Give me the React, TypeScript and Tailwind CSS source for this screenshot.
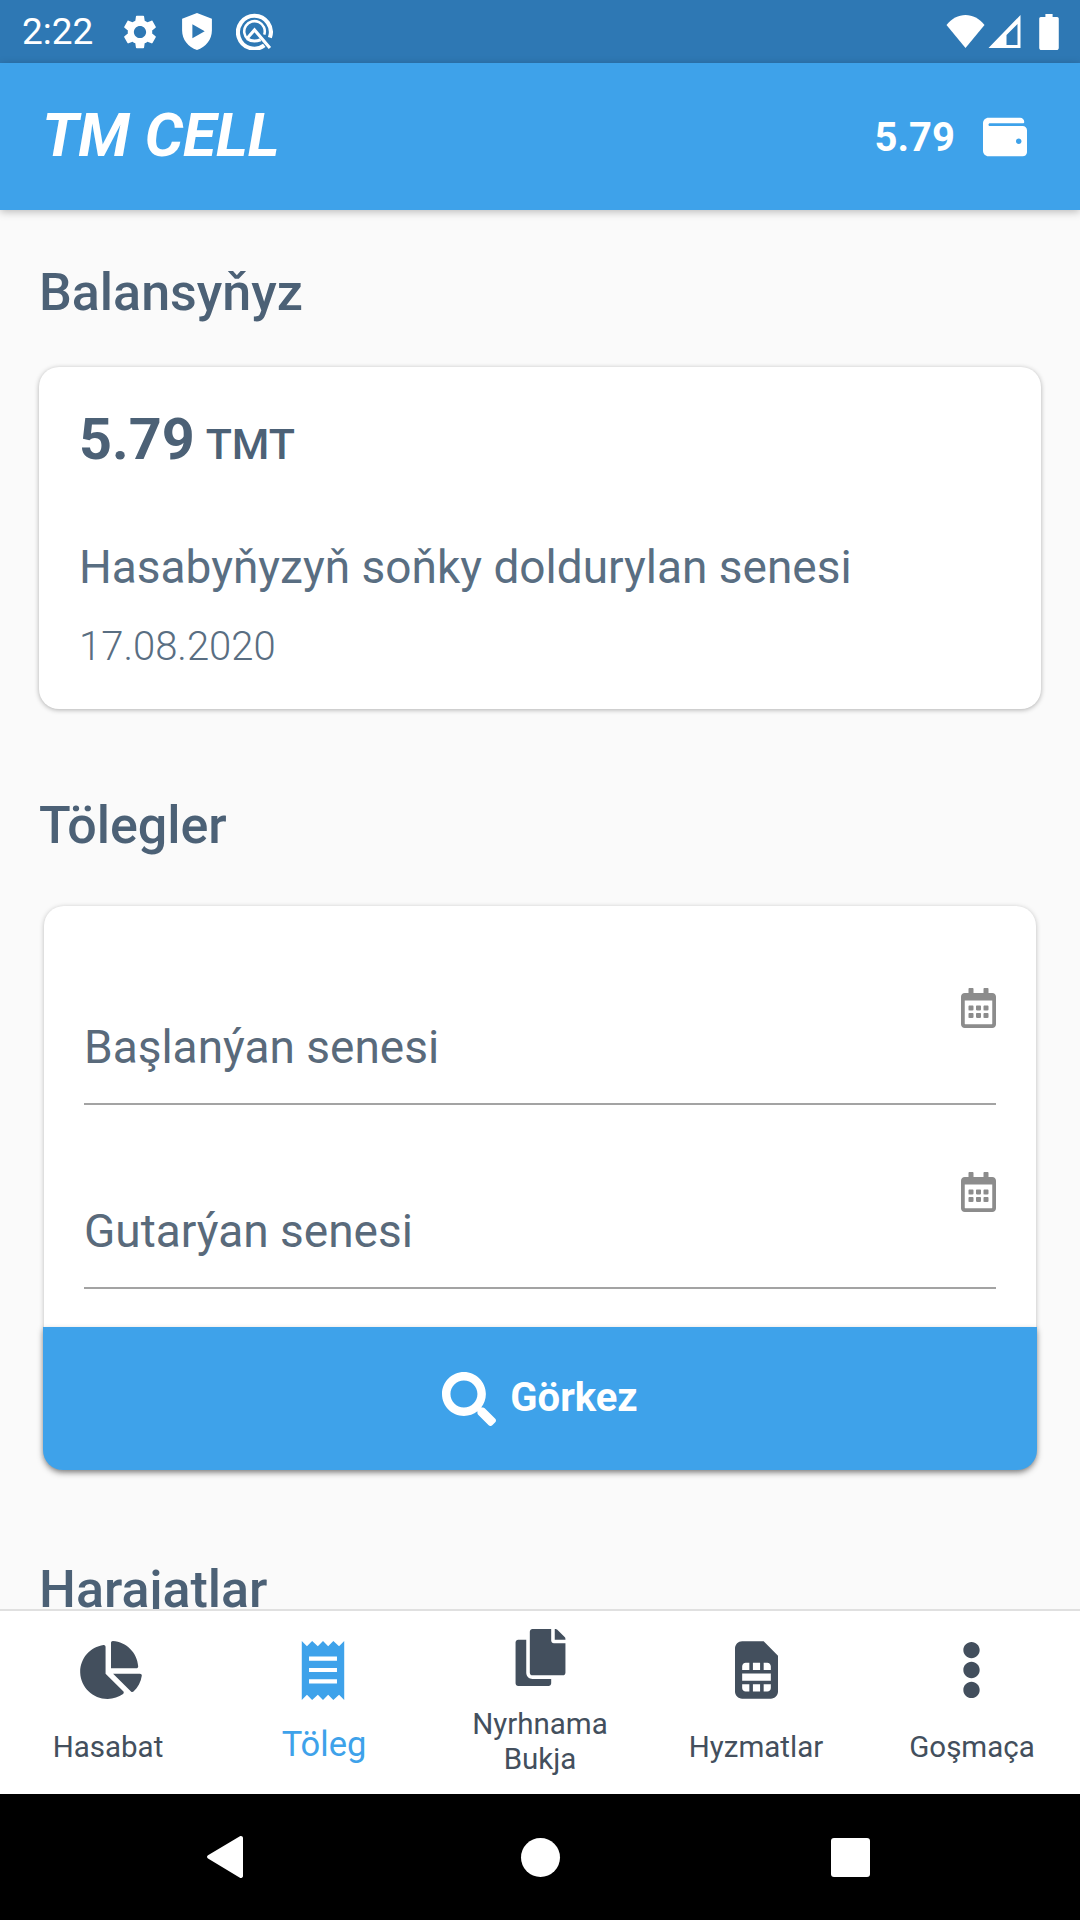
import React from 'react';
import { FaChartPie, FaCopy, FaEllipsisV, FaRegCalendarAlt, FaSearch, FaSimCard, FaWallet } from 'react-icons/fa';

const Gear = () => (
  <svg viewBox="2 2 20 20" className="w-[34px] h-[34px] fill-white">
    <path d="M19.14 12.94c.04-.3.06-.61.06-.94 0-.32-.02-.64-.07-.94l2.03-1.58c.18-.14.23-.41.12-.61l-1.92-3.32c-.12-.22-.37-.29-.59-.22l-2.39.96c-.5-.38-1.03-.7-1.62-.94l-.36-2.54c-.04-.24-.24-.41-.48-.41h-3.84c-.24 0-.43.17-.47.41l-.36 2.54c-.59.24-1.13.57-1.62.94l-2.39-.96c-.22-.08-.47 0-.59.22L2.74 8.87c-.12.21-.08.47.12.61l2.03 1.58c-.05.3-.09.63-.09.94s.02.64.07.94l-2.03 1.58c-.18.14-.23.41-.12.61l1.92 3.32c.12.22.37.29.59.22l2.39-.96c.5.38 1.03.7 1.62.94l.36 2.54c.05.24.24.41.48.41h3.84c.24 0 .44-.17.47-.41l.36-2.54c.59-.24 1.13-.56 1.62-.94l2.39.96c.22.08.47 0 .59-.22l1.92-3.32c.12-.22.07-.47-.12-.61l-2.01-1.58zM12 15.6c-1.98 0-3.6-1.62-3.6-3.6s1.62-3.6 3.6-3.6 3.6 1.62 3.6 3.6-1.62 3.6-3.6 3.6z" />
  </svg>
);

const ShieldPlay = () => (
  <svg viewBox="0 0 29 36" className="w-[30px] h-[37px]">
    <path fill="#fff" fillRule="evenodd" d="M14.5 0 29 5.5V17c0 8.8-6 16.2-14.5 19C6 33.2 0 25.8 0 17V5.5L14.5 0zM10 11v13.5L22 17.7 10 11z" />
  </svg>
);

const QLogo = () => (
  <svg viewBox="0 0 36 36" className="w-[37px] h-[37px]" fill="none" stroke="#fff">
    <path strokeWidth="4" d="M27.500 31.500A16 16 0 1 1 33 24" />
    <path strokeWidth="2.500" d="M11.500 25.500A10 10 0 1 1 27.500 21" />
    <path strokeWidth="3" d="M10.500 25 18 16.500 33 34" />
    <path strokeWidth="3" d="M11 25C15 28 19 28 24 26" />
  </svg>
);

const Wifi = () => (
  <svg viewBox="0 0 38 33" className="w-[39px] h-[33px] fill-white">
    <path d="M19 33 0 10C5 3.500 12 0 19 0s14 3.500 19 10L19 33z" />
  </svg>
);

const Signal = () => (
  <svg viewBox="0 0 32 33" className="w-[33px] h-[33px] fill-white">
    <path fillRule="evenodd" d="M32 0v33H0L32 0zM29 9 18 20v10h11V9z" />
  </svg>
);

const Battery = () => (
  <svg viewBox="0 0 19 35" className="w-[20px] h-[36px] fill-white">
    <path d="M6 0h7v3h4.500c.8 0 1.500.7 1.500 1.500V33c0 1.100-.9 2-2 2H2c-1.100 0-2-.9-2-2V4.500C0 3.700.7 3 1.500 3H6V0z" />
  </svg>
);

const Receipt = () => (
  <svg viewBox="0 0 41 57" className="w-[44px] h-[59px] -translate-x-[1px]">
    <path fill="#3ea2ea" d="M0 0l5 5 5-5 5.500 5L20.500 0l5 5 5-5 5.500 5L41 0v57l-5-5-5.500 5-5-5-5 5-5-5-5.500 5-5-5-5 5V0z" />
    <path fill="#fff" d="M7 15h27v4H7zM7 26h27v4H7zM7 37h27v4H7z" />
  </svg>
);

const navItems = [
  { label: 'Hasabat', icon: <FaChartPie className="w-[64px] h-[58px] translate-x-[3px]" />, labelClass: 'mt-[31px] text-[29.5px] leading-[35px] text-[#434f5d]' },
  { label: 'Töleg', icon: <Receipt />, labelClass: 'mt-[23px] text-[34.5px] leading-[42px] text-[#3ea2ea]' },
  { label: 'Nyrhnama Bukja', icon: <FaCopy className="w-[57px] h-[57px]" />, labelClass: 'mt-[21px] w-[150px] text-[29.5px] leading-[35px] text-[#434f5d]' },
  { label: 'Hyzmatlar', icon: <FaSimCard className="w-[43px] h-[58px]" />, labelClass: 'mt-[31px] text-[29.5px] leading-[35px] text-[#434f5d]' },
  { label: 'Goşmaça', icon: <FaEllipsisV className="w-[57px] h-[58px] -translate-x-[1px]" />, labelClass: 'mt-[31px] text-[29.5px] leading-[35px] text-[#434f5d]' },
];

const DateField = ({ label, className }: { label: string; className: string }) => (
  <div className={`relative h-[117px] border-b-2 border-[#a3a3a3] ${className}`}>
    <span className="absolute left-0 bottom-[29px] text-[46px] leading-[54px] text-[#596a7b]">{label}</span>
    <FaRegCalendarAlt className="absolute right-0 top-0 w-[35px] h-[40px] text-[#8c8c8c]" />
  </div>
);

export default function App() {
  return (
    <div className="w-[1080px] h-[1920px] flex flex-col overflow-hidden bg-[#fafafa] font-['Roboto',sans-serif]">
      {/* status bar */}
      <div className="h-[63px] shrink-0 bg-[#2e78b4] flex items-center pl-[22px] pr-[21px] text-white">
        <span className="text-[37px] leading-[43px] w-[101px]">2:22</span>
        <Gear />
        <div className="ml-[25px]"><ShieldPlay /></div>
        <div className="ml-[24px]"><QLogo /></div>
        <div className="ml-auto flex items-center gap-[3px]">
          <Wifi />
          <Signal />
          <div className="ml-[15px]"><Battery /></div>
        </div>
      </div>

      {/* app bar */}
      <div className="relative z-10 h-[147px] shrink-0 bg-[#3ea2ea] flex items-center pl-[42px] pr-[53px] text-white shadow-[0_2px_8px_rgba(0,0,0,0.25)]">
        <span className="text-[60.5px] leading-[70px] font-bold italic -mt-[2px]">TM CELL</span>
        <span className="ml-auto text-[40px] leading-[47px] font-bold mt-[1px]">5.79</span>
        <FaWallet className="ml-[28px] w-[44px] h-[44px]" />
      </div>

      {/* scroll area */}
      <div className="flex-1 min-h-0 overflow-hidden px-[39px] pt-[53px]">
        <h2 className="text-[52px] leading-[59px] font-medium text-[#4c6176]">Balansyňyz</h2>
        <div className="mt-[45px] h-[342px] bg-white rounded-[20px] shadow-[0_1px_5px_rgba(0,0,0,0.3)] px-[40px] pt-[40px]">
          <div className="flex items-baseline text-[#4c6176]">
            <span className="text-[57.5px] leading-[66px] font-bold">5.79</span>
            <span className="ml-[11px] text-[43px] leading-[50px] font-medium">TMT</span>
          </div>
          <p className="mt-[67px] text-[46px] leading-[54px] text-[#596e82]">Hasabyňyzyň soňky doldurylan senesi</p>
          <p className="mt-[29px] text-[40px] leading-[47px] font-light text-[#596e82]">17.08.2020</p>
        </div>

        <h2 className="mt-[87px] text-[52px] leading-[59px] font-medium text-[#4c6176]">Tölegler</h2>
        <div className="mt-[51px] mx-[5px] h-[564px] flex flex-col bg-white rounded-[20px] shadow-[0_1px_5px_rgba(0,0,0,0.25)]">
          <div className="flex-1 px-[40px] pt-[82px]">
            <DateField label="Başlanýan senesi" className="" />
            <DateField label="Gutarýan senesi" className="mt-[67px]" />
          </div>
          <div className="h-[143px] -mx-[1px] rounded-b-[20px] bg-[#3ea2ea] flex items-center justify-center text-white shadow-[0_3px_6px_rgba(0,0,0,0.35)]">
            <FaSearch className="w-[54px] h-[54px]" />
            <span className="ml-[14px] text-[40px] leading-[47px] font-bold -mt-[2px]">Görkez</span>
          </div>
        </div>

        <h2 className="mt-[90px] text-[52px] leading-[59px] font-medium text-[#4c6176]">Harajatlar</h2>
      </div>

      {/* bottom tabs */}
      <div className="h-[185px] shrink-0 bg-white border-t-2 border-[#e0e0e0] grid grid-cols-5">
        {navItems.map((item) => (
          <div key={item.label} className="flex flex-col items-center justify-center text-center text-[#434f5d]">
            {item.icon}
            <span className={item.labelClass}>{item.label}</span>
          </div>
        ))}
      </div>

      {/* android nav */}
      <div className="h-[126px] shrink-0 bg-black flex items-center">
        <svg viewBox="0 0 36 42" className="ml-[206px] w-[38px] h-[42px] fill-white">
          <path d="M34 0c1.100 0 2 .9 2 2v38c0 1.600-1.800 2.600-3.100 1.700L1 22.500c-1.300-.8-1.300-2.500 0-3.300L32.900.3C33.300.1 33.600 0 34 0z" />
        </svg>
        <div className="ml-[277px] w-[39px] h-[39px] rounded-full bg-white" />
        <div className="ml-[271px] w-[39px] h-[39px] rounded-[3px] bg-white" />
      </div>
    </div>
  );
}
